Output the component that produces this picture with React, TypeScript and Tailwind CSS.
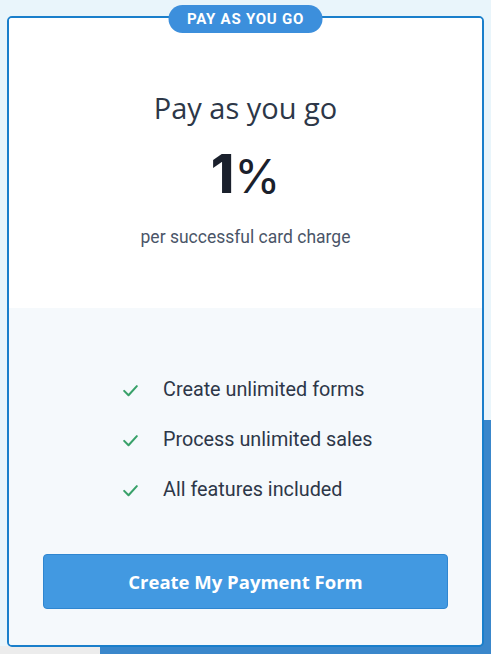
import React from 'react';

const features = ['Create unlimited forms', 'Process unlimited sales', 'All features included'];

const Check: React.FC = () => (
    <svg width="19" height="19" viewBox="0 0 24 24" fill="none" stroke="#38a169" strokeWidth="2.6" strokeLinecap="round" strokeLinejoin="round">
        <polyline points="4 12.5 9.5 18 20 6.5" />
    </svg>
);

const App: React.FC = () => {
    return (
        <div className="relative w-[491px] h-[654px] overflow-hidden bg-[#e9f5fb]" style={{ fontFamily: 'Roboto, "Liberation Sans", sans-serif' }}>
            {/* background blue shape */}
            <div className="absolute left-[100px] top-[420px] w-[400px] h-[240px] bg-[#3a87cb]" />
            <div className="absolute left-0 top-[646px] w-[100px] h-[10px] bg-[#ececec]" />

            <div className="relative pt-[16px] px-[7px]">
                <div className="relative border-2 border-[#1a7fcb] rounded-[5px] h-[631px] flex flex-col overflow-visible">
                    <div className="absolute -top-[13px] left-1/2 -translate-x-1/2 h-[28px] px-[19px] rounded-full bg-[#3c8fdc] flex items-center">
                        <span className="text-white font-bold text-[15px] tracking-[0.05em]">PAY AS YOU GO</span>
                    </div>

                    <div className="bg-white h-[290px] flex flex-col items-center rounded-t-[3px]">
                        <h2 className="mt-[72px] text-[29px] leading-[36px] text-[#2d3748]" style={{ fontFamily: '"Open Sans", sans-serif' }}>Pay as you go</h2>
                        <div className="mt-[18px] flex items-baseline text-[#1a202c] leading-[60px]">
                            <span className="text-[53px] font-extrabold" style={{ fontFamily: 'Inter, sans-serif' }}>1</span>
                            <span className="text-[47px] font-normal" style={{ fontFamily: 'Inter, sans-serif' }}>%</span>
                        </div>
                        <p className="mt-[18px] text-[17.5px] text-[#4a5568]">per successful card charge</p>
                    </div>

                    <div className="flex-1 bg-[#f5f9fc] flex flex-col items-center rounded-b-[3px]">
                        <ul className="mt-[70px] self-stretch pl-[112px] flex flex-col gap-[26px]">
                            {features.map((f) => (
                                <li key={f} className="flex items-center h-[24px] whitespace-nowrap">
                                    <Check />
                                    <span className="ml-[23px] text-[19.8px] text-[#2d3748]">{f}</span>
                                </li>
                            ))}
                        </ul>
                        <button className="mt-[52px] w-[405px] h-[55px] rounded-[4px] bg-[#4299e1] border border-[#2f86d0] text-white font-bold text-[18.5px]" style={{ fontFamily: '"Open Sans", sans-serif' }}>
                            Create My Payment Form
                        </button>
                    </div>
                </div>
            </div>
        </div>
    );
};

export default App;
